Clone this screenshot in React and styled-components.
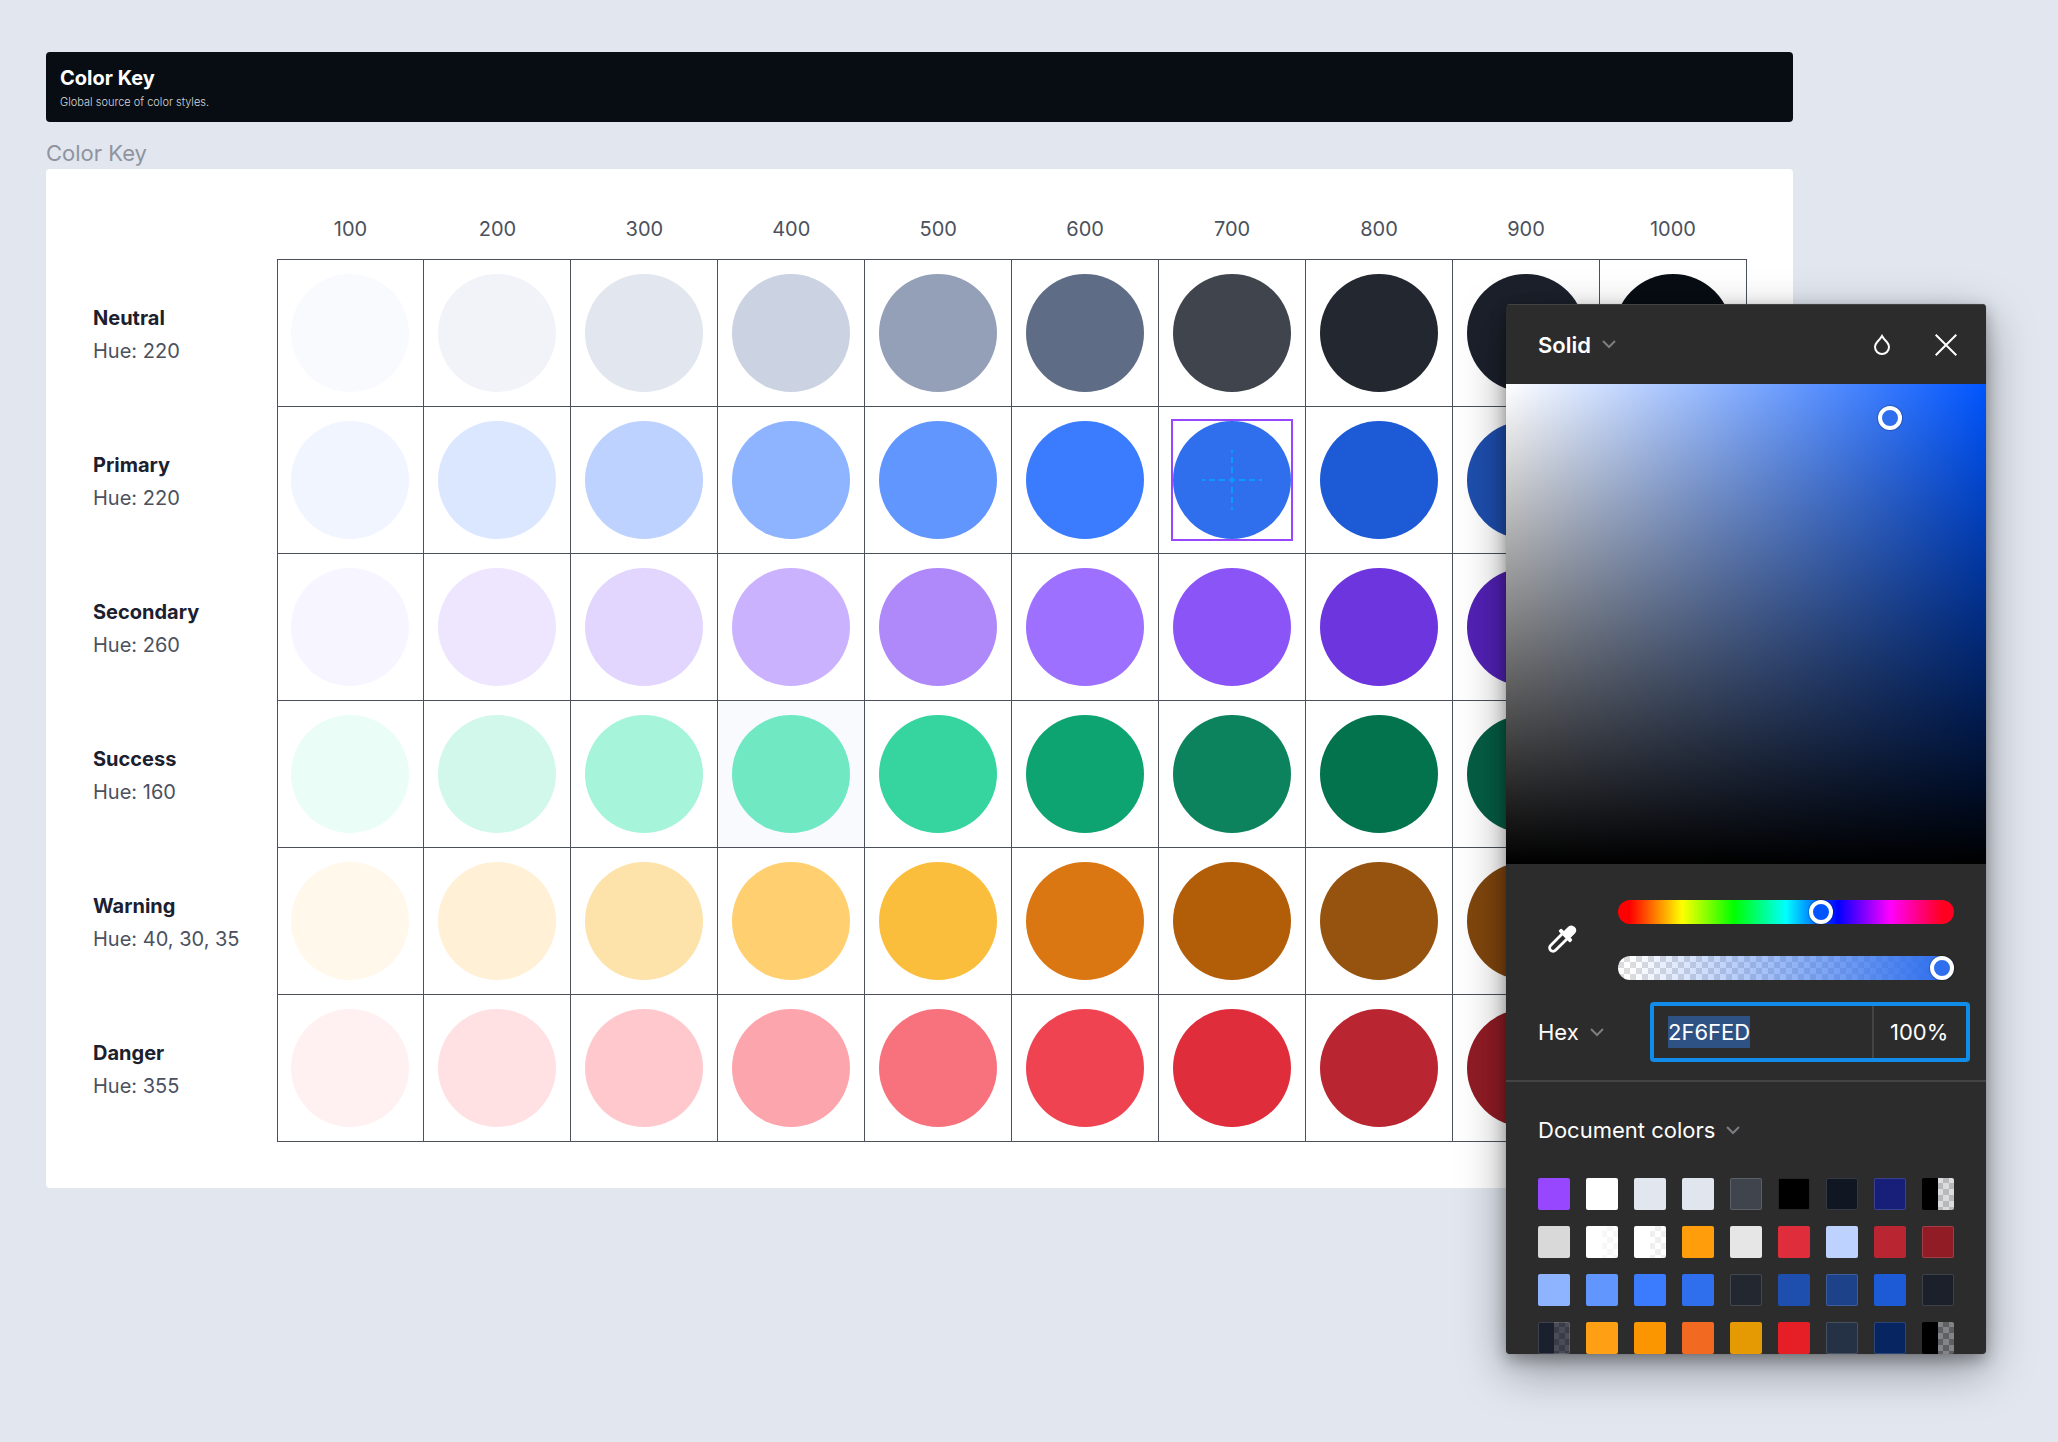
import React, { useEffect, useRef, useState } from "react";
import styled, { createGlobalStyle, css } from "styled-components";

const GlobalStyle = createGlobalStyle`
  *, *::before, *::after { box-sizing: border-box; }
  body {
    margin: 0;
    min-height: 100vh;
    background: #e1e6ef;
    font-family: Inter, "Liberation Sans", Arial, sans-serif;
  }
  button, input, select { font: inherit; color: inherit; margin: 0; }
`;

const SHADES = [100, 200, 300, 400, 500, 600, 700, 800, 900, 1000];

const PALETTE = [
  { name: "Neutral", hue: "220", colors: ["#f8fafe", "#f1f3f9", "#e1e6ef", "#cbd2e1", "#94a0b8", "#5f6c85", "#3f444d", "#23272f", "#1b202b", "#080d14"] },
  { name: "Primary", hue: "220", colors: ["#f0f5ff", "#dbe6ff", "#bdd2ff", "#8fb4ff", "#6196ff", "#3b7cff", "#2f6fed", "#1d5bd6", "#1e4eae", "#1d428a"] },
  { name: "Secondary", hue: "260", colors: ["#f7f5ff", "#eee6ff", "#e2d6ff", "#cbb2ff", "#af89fa", "#9e70ff", "#8b54f7", "#6d35de", "#5221b5", "#421d95"] },
  { name: "Success", hue: "160", colors: ["#ebfdf7", "#d1f8ea", "#a6f4da", "#70e8c1", "#36d49e", "#0ea472", "#0c835c", "#03734d", "#055e44", "#064d38"] },
  { name: "Warning", hue: "40, 30, 35", colors: ["#fff8eb", "#fff0d6", "#fde2aa", "#ffcf70", "#fbbe3c", "#db7712", "#b25e09", "#96530f", "#80460d", "#663a0c"] },
  { name: "Danger", hue: "355", colors: ["#fff1f2", "#ffe1e3", "#ffc8cd", "#fda5ad", "#f8727d", "#ef4352", "#df2d3c", "#b92531", "#911c25", "#761b22"] },
];

const DOCUMENT_COLORS = [
  { c: "#9747ff" }, { c: "#ffffff" }, { c: "#e1e6ef" }, { c: "#e1e5ee" }, { c: "#3f444d", edge: true }, { c: "#000000", edge: true }, { c: "#101722", edge: true }, { c: "#171f78", edge: true }, { c: "#000000", checker: ["#dcdcdc", "#b8b9bd"] },
  { c: "#d9d9d9" }, { c: "#ffffff", checker: ["#ffffff", "#f7f7f8"] }, { c: "#ffffff", checker: ["#ffffff", "#efeff0"] }, { c: "#ff9d0a" }, { c: "#e6e6e6" }, { c: "#df2d3c" }, { c: "#bdd2ff" }, { c: "#b92531" }, { c: "#911c25", edge: true },
  { c: "#8fb4ff" }, { c: "#6196ff" }, { c: "#3b7cff" }, { c: "#2f6fed" }, { c: "#23272f", edge: true }, { c: "#1e4eae" }, { c: "#1d428a", edge: true }, { c: "#1d5bd6" }, { c: "#1b202b", edge: true },
  { c: "#1b202f", edge: true, checker: ["#4a4d58", "#3a3d48"] }, { c: "#ff9f14" }, { c: "#fb9500" }, { c: "#f26a22" }, { c: "#e59a04" }, { c: "#e61e26" }, { c: "#253246", edge: true }, { c: "#072561", edge: true }, { c: "#000000", checker: ["#838486", "#5f6063"] },
];

const Page = styled.main`
  position: relative;
  min-height: 100vh;
  padding: 52px 265px 88px 46px;
`;

const Banner = styled.header`
  padding: 14px 14px 13px;
  border-radius: 4px;
  background: #080d14;
`;

const BannerTitle = styled.h1`
  margin: 0;
  font-size: 20px;
  font-weight: 700;
  line-height: 24px;
  color: #ffffff;
`;

const BannerText = styled.p`
  margin: 5px 0 0;
  font-size: 11px;
  line-height: 14px;
  font-weight: 300;
  color: #d6d8dc;
`;

const FrameLabel = styled.h2`
  margin: 15px 0 0;
  font-size: 22px;
  font-weight: 400;
  line-height: 32px;
  color: #8f949e;
`;

const Frame = styled.section`
  padding: 30px 46px 46px;
  border-radius: 4px;
  background: #ffffff;
`;

const KeyTable = styled.table`
  width: 100%;
  table-layout: fixed;
  border-collapse: collapse;
`;

const LabelColumn = styled.col`
  width: 185px;
`;

const ShadeHead = styled.th`
  height: 60px;
  padding: 0;
  font-size: 20px;
  font-weight: 400;
  line-height: 24px;
  color: #4b515d;
`;

const RowHead = styled.th`
  height: 147px;
  padding: 5px 0 0 1px;
  text-align: left;
  font-weight: 400;
`;

const RowName = styled.span`
  display: block;
  font-size: 20px;
  font-weight: 700;
  line-height: 33px;
  color: #1b202f;
`;

const RowHue = styled.span`
  display: block;
  font-size: 20px;
  line-height: 33px;
  color: #4b515d;
`;

const ColorCell = styled.td`
  height: 147px;
  padding: 0;
  border: 1px solid #4b505a;
  background: ${({ $hovered }) => ($hovered ? "#f8fafe" : "transparent")};
`;

const CircleFrame = styled.div`
  position: relative;
  width: 118px;
  margin: 0 auto;
  ${({ $selected }) =>
    $selected &&
    css`
      outline: 2px solid #9747ff;
    `}
`;

const Circle = styled.div`
  height: 118px;
  border-radius: 50%;
  background: ${({ $color }) => $color};
`;

const CrossMark = styled.svg`
  position: absolute;
  inset: 0;
`;

const Picker = styled.aside`
  position: absolute;
  top: 304px;
  right: 72px;
  width: 480px;
  border-radius: 4px;
  overflow: hidden;
  background: #2c2c2c;
  color: #ffffff;
  font-size: 22px;
  line-height: 32px;
  box-shadow: 0 0 1px rgba(0, 0, 0, 0.3), 0 16px 48px rgba(0, 0, 0, 0.36), 0 6px 16px rgba(0, 0, 0, 0.3);
`;

const PickerHeader = styled.div`
  display: flex;
  align-items: center;
  height: 80px;
  padding: 0 24px 0 32px;
  border-top: 1px solid #434343;
`;

const SelectWrap = styled.label`
  display: inline-flex;
  align-items: center;
  gap: 11px;
  color: #7d7d82;
`;

const PlainSelect = styled.select`
  appearance: none;
  padding: 0;
  border: 0;
  background: transparent;
  color: #ffffff;
  font-weight: ${({ $strong }) => ($strong ? 600 : 400)};
  field-sizing: content;
  line-height: 32px;
`;

const IconButton = styled.button`
  display: flex;
  align-items: center;
  justify-content: center;
  width: 32px;
  height: 32px;
  padding: 0;
  border: 0;
  background: transparent;
  color: #ffffff;
`;

const HeaderActions = styled.div`
  display: flex;
  gap: 32px;
  margin-left: auto;
`;

const ColorField = styled.div`
  position: relative;
  height: 480px;
  background:
    linear-gradient(to top, #000000, rgba(0, 0, 0, 0)),
    linear-gradient(to right, #ffffff, #0055ff);
`;

const FieldHandle = styled.button`
  position: absolute;
  top: 22px;
  right: 84px;
  width: 24px;
  height: 24px;
  padding: 0;
  border: 4px solid #ffffff;
  border-radius: 50%;
  background: #2f6fed;
  box-shadow: 0 0 1px 1px rgba(0, 0, 0, 0.2);
`;

const SliderArea = styled.div`
  display: flex;
  align-items: center;
  gap: 40px;
  padding: 36px 32px 22px;
`;

const DropperButton = styled(IconButton)`
  margin-left: 8px;
  margin-bottom: 2px;
`;

const Sliders = styled.div`
  display: flex;
  flex: 1;
  flex-direction: column;
  gap: 32px;
`;

const Slider = styled.input`
  appearance: none;
  display: block;
  width: 100%;
  height: 24px;
  border-radius: 12px;
  background: ${({ $track }) => $track};

  &::-webkit-slider-thumb {
    appearance: none;
    width: 24px;
    height: 24px;
    border: 4px solid #ffffff;
    border-radius: 50%;
    background: ${({ $thumb }) => $thumb};
    box-shadow: 0 0 1px 1px rgba(0, 0, 0, 0.2);
  }
`;

const HUE_TRACK =
  "linear-gradient(to right, #f00 12px, transparent 12px calc(100% - 12px), #ff0020 calc(100% - 12px)), linear-gradient(to right, #f00, #ff0, #0f0, #0ff, #00f, #f0f, #ff0020) 12px 0 / calc(100% - 24px) 100% no-repeat";
const ALPHA_TRACK =
  "linear-gradient(to right, rgba(47,111,237,0) 12px, #2f6fed calc(100% - 12px)), repeating-conic-gradient(#dcdcde 0 25%, #ffffff 0 50%) 0 0 / 12px 12px";

const ValueRow = styled.div`
  display: flex;
  align-items: center;
  justify-content: space-between;
  padding: 0 16px 18px 32px;
  border-bottom: 2px solid #444444;
`;

const ValueBox = styled.div`
  display: flex;
  width: 320px;
  height: 60px;
  border: 4px solid #118ce8;
  border-radius: 4px;
`;

const HexInput = styled.input`
  flex: 1;
  min-width: 0;
  padding: 0 14px;
  border: 0;
  outline: 0;
  background: transparent;

  &::selection {
    background: rgba(46, 82, 133, 0.996);
    color: #ffffff;
  }
`;

const OpacityInput = styled.input`
  width: 94px;
  padding: 0 16px;
  border: 0;
  border-left: 2px solid #444444;
  outline: 0;
  background: transparent;
`;

const Library = styled.section`
  padding: 32px 32px 0;
`;

const SwatchGrid = styled.div`
  display: grid;
  grid-template-columns: repeat(9, 32px);
  justify-content: space-between;
  gap: 16px;
  margin-top: 32px;
`;

const Swatch = styled.button`
  display: flex;
  justify-content: flex-end;
  height: 32px;
  padding: 0;
  border: 1px solid ${({ $edge }) => ($edge ? "rgba(255, 255, 255, 0.15)" : "transparent")};
  border-radius: 2px;
  background: ${({ $color }) => $color} border-box;
  ${({ $checker, $color }) =>
    $checker &&
    css`
      background:
        linear-gradient(to right, ${$color} 50%, transparent 50%) border-box,
        repeating-conic-gradient(${$checker[0]} 0 25%, ${$checker[1]} 0 50%) 15px 5px / 12px 12px border-box;
    `}
`;

const ChevronIcon = () => (
  <svg width="14" height="9" viewBox="0 0 14 9" fill="none" stroke="currentColor" strokeWidth="2" aria-hidden="true">
    <path d="M1 1l6 6 6-6" />
  </svg>
);

const DropIcon = () => (
  <svg width="18" height="22" viewBox="0 0 18 22" fill="none" stroke="currentColor" strokeWidth="2" aria-hidden="true">
    <path d="M9 2C7.800 4.200 6 6 4 8.200A7.200 7.200 0 0 0 2 13a7 7 0 0 0 14 0 7.200 7.200 0 0 0-2-4.800C12 6 10.200 4.200 9 2z" />
  </svg>
);

const CloseIcon = () => (
  <svg width="22" height="22" viewBox="0 0 22 22" fill="none" stroke="currentColor" strokeWidth="2" aria-hidden="true">
    <path d="M.7.7l20.600 20.600M21.300.7L.7 21.300" />
  </svg>
);

const DropperIcon = () => (
  <svg width="30" height="30" viewBox="0 0 30 30" fill="none" aria-hidden="true">
    <path d="M15 10L3.600 21.400a3.400 3.400 0 0 0 4.900 4.900L20 15" stroke="currentColor" strokeWidth="2.800" />
    <path d="M21.500 2.600a4.700 4.700 0 0 1 6.600 6.600l-4.500 4.500 1 1a1.700 1.700 0 0 1 0 2.400l-.6.600a1.500 1.500 0 0 1-2.100 0L12.300 8.100a1.500 1.500 0 0 1 0-2.100l.6-.6a1.700 1.700 0 0 1 2.400 0l1.600 1.600z" fill="currentColor" />
  </svg>
);

function ColorKey() {
  return (
    <KeyTable aria-label="Color Key">
      <colgroup>
        <LabelColumn />
        {SHADES.map((shade) => (
          <col key={shade} />
        ))}
      </colgroup>
      <thead>
        <tr>
          <td />
          {SHADES.map((shade) => (
            <ShadeHead key={shade} scope="col">{shade}</ShadeHead>
          ))}
        </tr>
      </thead>
      <tbody>
        {PALETTE.map(({ name, hue, colors }) => (
          <tr key={name}>
            <RowHead scope="row">
              <RowName>{name}</RowName>
              <RowHue>Hue: {hue}</RowHue>
            </RowHead>
            {colors.map((color, i) => {
              const selected = name === "Primary" && SHADES[i] === 700;
              return (
                <ColorCell key={color} $hovered={name === "Success" && SHADES[i] === 400}>
                  <CircleFrame $selected={selected}>
                    <Circle $color={color} />
                    {selected && (
                      <CrossMark viewBox="0 0 118 118" stroke="#0d99ff" strokeWidth="2" aria-hidden="true">
                        <path d="M59 29v60M29 59h60" strokeDasharray="6 4" strokeDashoffset="3" />
                      </CrossMark>
                    )}
                  </CircleFrame>
                </ColorCell>
              );
            })}
          </tr>
        ))}
      </tbody>
    </KeyTable>
  );
}

function ColorPicker() {
  const hexRef = useRef(null);
  const [hex, setHex] = useState("2F6FED");
  const [opacity, setOpacity] = useState("100%");

  useEffect(() => {
    hexRef.current.focus();
    hexRef.current.select();
  }, []);

  return (
    <Picker aria-label="Color picker">
      <PickerHeader>
        <SelectWrap>
          <PlainSelect $strong aria-label="Fill type">
            <option>Solid</option>
          </PlainSelect>
          <ChevronIcon />
        </SelectWrap>
        <HeaderActions>
          <IconButton aria-label="Blend mode"><DropIcon /></IconButton>
          <IconButton aria-label="Close"><CloseIcon /></IconButton>
        </HeaderActions>
      </PickerHeader>
      <ColorField>
        <FieldHandle aria-label="Saturation and brightness" />
      </ColorField>
      <SliderArea>
        <DropperButton aria-label="Pick color"><DropperIcon /></DropperButton>
        <Sliders>
          <Slider type="range" aria-label="Hue" min="0" max="360" defaultValue="220" $track={HUE_TRACK} $thumb="#0055ff" />
          <Slider type="range" aria-label="Opacity" min="0" max="100" defaultValue="100" $track={ALPHA_TRACK} $thumb="#2f6fed" />
        </Sliders>
      </SliderArea>
      <ValueRow>
        <SelectWrap>
          <PlainSelect aria-label="Color format">
            <option>Hex</option>
          </PlainSelect>
          <ChevronIcon />
        </SelectWrap>
        <ValueBox>
          <HexInput ref={hexRef} aria-label="Hex value" spellCheck={false} value={hex} onChange={(e) => setHex(e.target.value)} />
          <OpacityInput aria-label="Opacity value" value={opacity} onChange={(e) => setOpacity(e.target.value)} />
        </ValueBox>
      </ValueRow>
      <Library>
        <SelectWrap>
          <PlainSelect aria-label="Color library">
            <option>Document colors</option>
          </PlainSelect>
          <ChevronIcon />
        </SelectWrap>
        <SwatchGrid>
          {DOCUMENT_COLORS.map(({ c, edge, checker }, i) => (
            <Swatch key={i} aria-label={c} $color={c} $edge={edge} $checker={checker} />
          ))}
        </SwatchGrid>
      </Library>
    </Picker>
  );
}

export default function App() {
  return (
    <>
      <GlobalStyle />
      <Page>
        <Banner>
          <BannerTitle>Color Key</BannerTitle>
          <BannerText>Global source of color styles.</BannerText>
        </Banner>
        <FrameLabel>Color Key</FrameLabel>
        <Frame>
          <ColorKey />
        </Frame>
        <ColorPicker />
      </Page>
    </>
  );
}
